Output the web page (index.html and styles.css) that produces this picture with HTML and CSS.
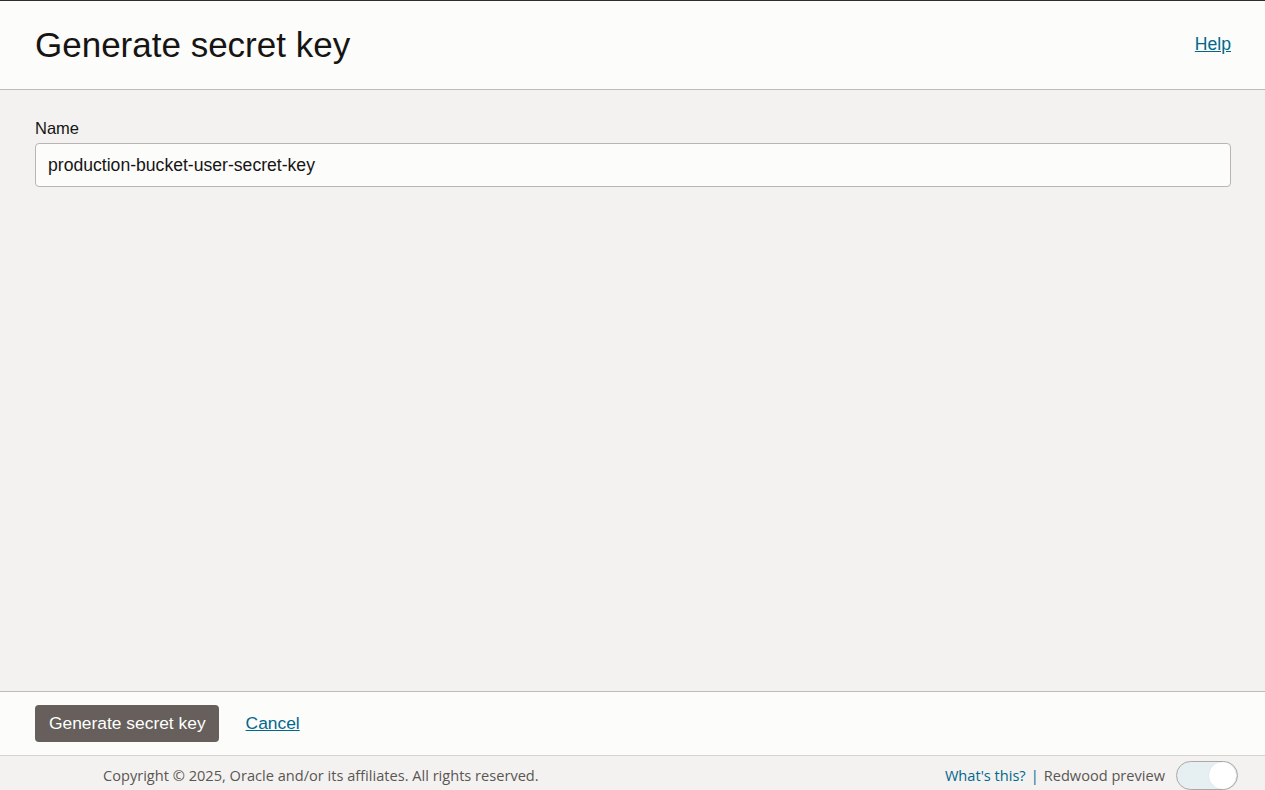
FILE: index.html
```html
<!DOCTYPE html>
<html lang="en">
<head>
<meta charset="utf-8">
<title>Generate secret key</title>
<link rel="stylesheet" href="styles.css">
</head>
<body>
<div class="app">
  <header class="panel-header">
    <h1 class="title">Generate secret key</h1>
    <a class="link help" href="#">Help</a>
  </header>
  <main class="panel-body">
    <label class="field-label" for="name">Name</label>
    <input id="name" class="text-input" type="text" value="production-bucket-user-secret-key">
  </main>
  <div class="panel-actions">
    <button class="btn-primary" type="button">Generate secret key</button>
    <a class="link cancel" href="#">Cancel</a>
  </div>
</div>
<footer class="page-footer">
  <span class="copyright">Copyright © 2025, Oracle and/or its affiliates. All rights reserved.</span>
  <div class="preview">
    <a class="whats" href="#">What's this?</a>
    <span class="sep">|</span>
    <span class="preview-label">Redwood preview</span>
    <span class="toggle"><span class="knob"></span></span>
  </div>
</footer>
</body>
</html>
```

FILE: styles.css
```css
* { box-sizing: border-box; }

html, body {
  margin: 0;
  padding: 0;
}

body {
  font-family: "Liberation Sans", Arial, sans-serif;
  color: #161513;
  background: #f3f2f1;
  overflow: hidden;
}

.app {
  height: calc(100vh - 34px);
  display: flex;
  flex-direction: column;
  border-top: 1px solid #312d2a;
}

.panel-header {
  height: 89px;
  flex: none;
  display: flex;
  align-items: center;
  justify-content: space-between;
  padding: 0 34px 0 35px;
  background: #fcfcfb;
  border-bottom: 1px solid #bdbab7;
}

.title {
  margin: 0;
  font-size: 35px;
  font-weight: normal;
  line-height: 1;
  padding-bottom: 2px;
}

.link {
  color: #00688c;
  text-decoration: underline;
}

.help {
  font-size: 17.6px;
  padding-bottom: 2px;
}

.panel-body {
  flex: 1;
  display: flex;
  flex-direction: column;
  padding: 28px 34px 0 35px;
  background: #f3f2f1;
}

.field-label {
  font-size: 16.5px;
  line-height: 20px;
  margin-bottom: 5px;
}

.text-input {
  height: 44px;
  width: 100%;
  border: 1px solid #b9b5b1;
  border-radius: 4px;
  background: #fcfcfb;
  padding: 0 12px;
  font-family: "Liberation Sans", Arial, sans-serif;
  font-size: 17.6px;
  color: #161513;
  outline: none;
}

.panel-actions {
  height: 65px;
  flex: none;
  display: flex;
  align-items: center;
  gap: 27px;
  padding: 0 35px;
  background: #fcfcfb;
  border-top: 1px solid #bdbab7;
  border-bottom: 1px solid #d6d3d0;
}

.btn-primary {
  height: 37px;
  padding: 0 13px 0 14px;
  border: none;
  border-radius: 4px;
  background: #665f5b;
  color: #ffffff;
  font-family: "Liberation Sans", Arial, sans-serif;
  font-size: 17.4px;
  cursor: pointer;
}

.cancel {
  font-size: 17.4px;
}

.page-footer {
  height: 44px;
  display: flex;
  align-items: flex-start;
  justify-content: space-between;
  padding: 5px 27px 0 103px;
  background: #f3f2f1;
  font-family: "Open Sans", "Noto Sans", sans-serif;
  font-size: 14.6px;
  color: #5b5652;
}

.copyright,
.preview {
  height: 28px;
  display: flex;
  align-items: center;
}

.preview {
  gap: 5px;
}

.whats {
  color: #00688c;
  text-decoration: none;
}

.sep {
  color: #00688c;
}

.preview-label {
  margin-right: 6px;
}

.toggle {
  width: 62px;
  height: 29px;
  border: 1px solid #aca8a4;
  border-radius: 15px;
  background: #e6f0f2;
  display: flex;
  align-items: center;
  justify-content: flex-end;
  padding-right: 1px;
}

.knob {
  width: 27px;
  height: 27px;
  border-radius: 50%;
  background: #ffffff;
  box-shadow: 0 0 1px rgba(0, 0, 0, 0.15);
}
```
